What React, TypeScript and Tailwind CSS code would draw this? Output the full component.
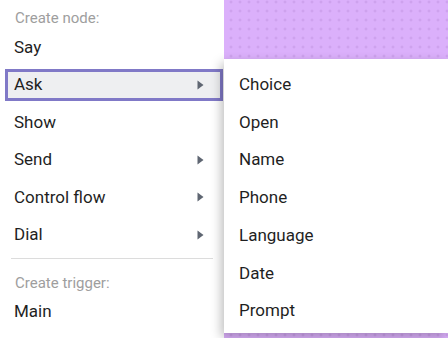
import React from "react";

const nodeItems = [
  { label: "Say", sub: false },
  { label: "Ask", sub: true, active: true },
  { label: "Show", sub: false },
  { label: "Send", sub: true },
  { label: "Control flow", sub: true },
  { label: "Dial", sub: true },
];

const askItems = ["Choice", "Open", "Name", "Phone", "Language", "Date", "Prompt"];

function Caret() {
  return (
    <svg width="7" height="10" viewBox="0 0 7 10" className="shrink-0">
      <path d="M0.5 0.5 L6.5 5 L0.5 9.5 Z" fill="#5f6672" />
    </svg>
  );
}

export default function App() {
  return (
    <div
      className="w-[448px] h-[338px] overflow-hidden flex bg-[#dbb0fb] bg-[radial-gradient(circle,#c99ee9_1px,transparent_1.2px)] bg-[length:9px_9px] bg-[position:1.5px_-2.5px]"
      style={{ fontFamily: "Roboto, 'Liberation Sans', sans-serif" }}
    >
      {/* Main context menu */}
      <div className="w-[224px] h-full bg-white shrink-0 flex flex-col pt-[7px]">
        <div className="h-[22px] flex items-center px-[15px] text-[15px] text-[#9e9e9e]">Create node:</div>
        {nodeItems.map((item) => (
          <div key={item.label} className="h-[37.4px] flex">
            {item.active ? (
              <div className="flex-1 my-[3px] ml-[5px] mr-[1px] border-[3px] border-[#8079c7] bg-[#eeeff1] flex items-center pl-[6px] pr-[16px] text-[17px] text-[#1f1f1f]">
                <span className="flex-1">{item.label}</span>
                <Caret />
              </div>
            ) : (
              <div className="flex-1 flex items-center pl-[14px] pr-[20px] text-[17px] text-[#1f1f1f]">
                <span className="flex-1">{item.label}</span>
                {item.sub && <Caret />}
              </div>
            )}
          </div>
        ))}
        <div className="mt-[5px] mx-[11px] h-px bg-[#dcdcdc]" />
        <div className="h-[20px] mt-[14px] flex items-center px-[15px] text-[15px] text-[#9e9e9e]">Create trigger:</div>
        <div className="h-[37.4px] flex items-center pl-[14px] text-[17px] text-[#1f1f1f]">Main</div>
      </div>

      {/* Ask submenu */}
      <div className="flex-1 pt-[59px]">
        <div className="h-[274px] bg-white shadow-[-3px_4px_10px_rgba(0,0,0,0.25)] flex flex-col pt-[7px]">
          {askItems.map((label) => (
            <div key={label} className="h-[37.7px] flex items-center pl-[15px] text-[17px] text-[#1f1f1f]">
              {label}
            </div>
          ))}
        </div>
      </div>
    </div>
  );
}
